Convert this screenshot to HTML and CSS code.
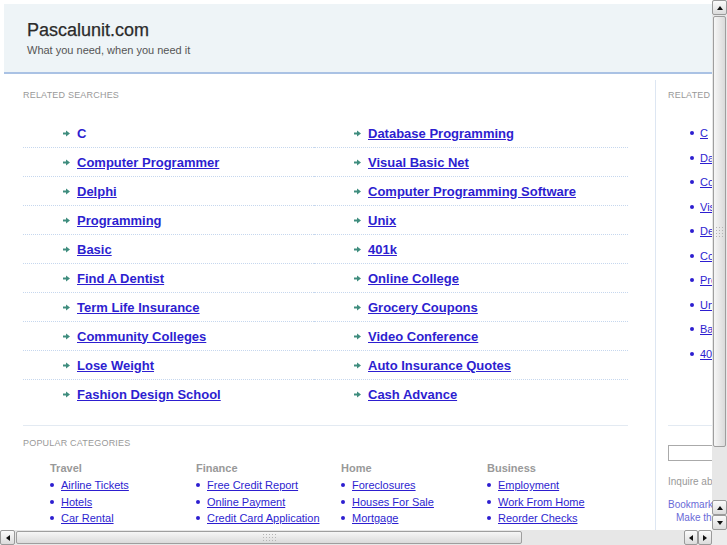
FILE: index.html
```html
<!DOCTYPE html>
<html lang="en">
<head>
    <meta charset="UTF-8">
    <title>Pascalunit.com</title>
    <link rel="stylesheet" href="styles.css">
</head>
<body>
    <div class="viewport">
        <div class="page">
            <div class="header">
                <h1>Pascalunit.com</h1>
                <p>What you need, when you need it</p>
            </div>
            <div class="content">
                <div class="main">
                    <h2 class="label">Related Searches</h2>
                    <ul class="searches">
                        <li><svg class="arr" width="7" height="7" viewBox="0 0 7 7"><path d="M0 3.5h4" stroke="#3f8d7e" stroke-width="2"/><path d="M3 0.5L7 3.5L3 6.5z" fill="#3f8d7e"/></svg><a href="#" class="plain">C</a></li>
                        <li><svg class="arr" width="7" height="7" viewBox="0 0 7 7"><path d="M0 3.5h4" stroke="#3f8d7e" stroke-width="2"/><path d="M3 0.5L7 3.5L3 6.5z" fill="#3f8d7e"/></svg><a href="#">Database Programming</a></li>
                        <li><svg class="arr" width="7" height="7" viewBox="0 0 7 7"><path d="M0 3.5h4" stroke="#3f8d7e" stroke-width="2"/><path d="M3 0.5L7 3.5L3 6.5z" fill="#3f8d7e"/></svg><a href="#">Computer Programmer</a></li>
                        <li><svg class="arr" width="7" height="7" viewBox="0 0 7 7"><path d="M0 3.5h4" stroke="#3f8d7e" stroke-width="2"/><path d="M3 0.5L7 3.5L3 6.5z" fill="#3f8d7e"/></svg><a href="#">Visual Basic Net</a></li>
                        <li><svg class="arr" width="7" height="7" viewBox="0 0 7 7"><path d="M0 3.5h4" stroke="#3f8d7e" stroke-width="2"/><path d="M3 0.5L7 3.5L3 6.5z" fill="#3f8d7e"/></svg><a href="#">Delphi</a></li>
                        <li><svg class="arr" width="7" height="7" viewBox="0 0 7 7"><path d="M0 3.5h4" stroke="#3f8d7e" stroke-width="2"/><path d="M3 0.5L7 3.5L3 6.5z" fill="#3f8d7e"/></svg><a href="#">Computer Programming Software</a></li>
                        <li><svg class="arr" width="7" height="7" viewBox="0 0 7 7"><path d="M0 3.5h4" stroke="#3f8d7e" stroke-width="2"/><path d="M3 0.5L7 3.5L3 6.5z" fill="#3f8d7e"/></svg><a href="#">Programming</a></li>
                        <li><svg class="arr" width="7" height="7" viewBox="0 0 7 7"><path d="M0 3.5h4" stroke="#3f8d7e" stroke-width="2"/><path d="M3 0.5L7 3.5L3 6.5z" fill="#3f8d7e"/></svg><a href="#">Unix</a></li>
                        <li><svg class="arr" width="7" height="7" viewBox="0 0 7 7"><path d="M0 3.5h4" stroke="#3f8d7e" stroke-width="2"/><path d="M3 0.5L7 3.5L3 6.5z" fill="#3f8d7e"/></svg><a href="#">Basic</a></li>
                        <li><svg class="arr" width="7" height="7" viewBox="0 0 7 7"><path d="M0 3.5h4" stroke="#3f8d7e" stroke-width="2"/><path d="M3 0.5L7 3.5L3 6.5z" fill="#3f8d7e"/></svg><a href="#">401k</a></li>
                        <li><svg class="arr" width="7" height="7" viewBox="0 0 7 7"><path d="M0 3.5h4" stroke="#3f8d7e" stroke-width="2"/><path d="M3 0.5L7 3.5L3 6.5z" fill="#3f8d7e"/></svg><a href="#">Find A Dentist</a></li>
                        <li><svg class="arr" width="7" height="7" viewBox="0 0 7 7"><path d="M0 3.5h4" stroke="#3f8d7e" stroke-width="2"/><path d="M3 0.5L7 3.5L3 6.5z" fill="#3f8d7e"/></svg><a href="#">Online College</a></li>
                        <li><svg class="arr" width="7" height="7" viewBox="0 0 7 7"><path d="M0 3.5h4" stroke="#3f8d7e" stroke-width="2"/><path d="M3 0.5L7 3.5L3 6.5z" fill="#3f8d7e"/></svg><a href="#">Term Life Insurance</a></li>
                        <li><svg class="arr" width="7" height="7" viewBox="0 0 7 7"><path d="M0 3.5h4" stroke="#3f8d7e" stroke-width="2"/><path d="M3 0.5L7 3.5L3 6.5z" fill="#3f8d7e"/></svg><a href="#">Grocery Coupons</a></li>
                        <li><svg class="arr" width="7" height="7" viewBox="0 0 7 7"><path d="M0 3.5h4" stroke="#3f8d7e" stroke-width="2"/><path d="M3 0.5L7 3.5L3 6.5z" fill="#3f8d7e"/></svg><a href="#">Community Colleges</a></li>
                        <li><svg class="arr" width="7" height="7" viewBox="0 0 7 7"><path d="M0 3.5h4" stroke="#3f8d7e" stroke-width="2"/><path d="M3 0.5L7 3.5L3 6.5z" fill="#3f8d7e"/></svg><a href="#">Video Conference</a></li>
                        <li><svg class="arr" width="7" height="7" viewBox="0 0 7 7"><path d="M0 3.5h4" stroke="#3f8d7e" stroke-width="2"/><path d="M3 0.5L7 3.5L3 6.5z" fill="#3f8d7e"/></svg><a href="#">Lose Weight</a></li>
                        <li><svg class="arr" width="7" height="7" viewBox="0 0 7 7"><path d="M0 3.5h4" stroke="#3f8d7e" stroke-width="2"/><path d="M3 0.5L7 3.5L3 6.5z" fill="#3f8d7e"/></svg><a href="#">Auto Insurance Quotes</a></li>
                        <li><svg class="arr" width="7" height="7" viewBox="0 0 7 7"><path d="M0 3.5h4" stroke="#3f8d7e" stroke-width="2"/><path d="M3 0.5L7 3.5L3 6.5z" fill="#3f8d7e"/></svg><a href="#">Fashion Design School</a></li>
                        <li><svg class="arr" width="7" height="7" viewBox="0 0 7 7"><path d="M0 3.5h4" stroke="#3f8d7e" stroke-width="2"/><path d="M3 0.5L7 3.5L3 6.5z" fill="#3f8d7e"/></svg><a href="#">Cash Advance</a></li>
                    </ul>

                    <h2 class="label label-cats">Popular Categories</h2>
                    <div class="cats">
                        <div class="cat">
                            <h3>Travel</h3>
                            <ul>
                                <li><a href="#">Airline Tickets</a></li>
                                <li><a href="#">Hotels</a></li>
                                <li><a href="#">Car Rental</a></li>
                            </ul>
                        </div>
                        <div class="cat">
                            <h3>Finance</h3>
                            <ul>
                                <li><a href="#">Free Credit Report</a></li>
                                <li><a href="#">Online Payment</a></li>
                                <li><a href="#">Credit Card Application</a></li>
                            </ul>
                        </div>
                        <div class="cat">
                            <h3>Home</h3>
                            <ul>
                                <li><a href="#">Foreclosures</a></li>
                                <li><a href="#">Houses For Sale</a></li>
                                <li><a href="#">Mortgage</a></li>
                            </ul>
                        </div>
                        <div class="cat">
                            <h3>Business</h3>
                            <ul>
                                <li><a href="#">Employment</a></li>
                                <li><a href="#">Work From Home</a></li>
                                <li><a href="#">Reorder Checks</a></li>
                            </ul>
                        </div>
                    </div>
                </div>

                <div class="side">
                    <h2 class="label">Related Searches</h2>
                    <ul class="side-list">
                        <li><a href="#">C</a></li>
                        <li><a href="#">Database Programming</a></li>
                        <li><a href="#">Computer Programmer</a></li>
                        <li><a href="#">Visual Basic Net</a></li>
                        <li><a href="#">Delphi</a></li>
                        <li><a href="#">Computer Programming Software</a></li>
                        <li><a href="#">Programming</a></li>
                        <li><a href="#">Unix</a></li>
                        <li><a href="#">Basic</a></li>
                        <li><a href="#">401k</a></li>
                    </ul>
                    <div class="tools">
                        <input type="text" class="search">
                        <p class="inquire">Inquire about this domain</p>
                        <p class="bookmark">Bookmark this page</p>
                        <p class="bookmark indent">Make this your homepage</p>
                    </div>
                </div>
            </div>
        </div>
    </div>

    <div class="vscroll">
        <div class="btn up"></div>
        <div class="track">
            <div class="thumb thumb-v"><span class="grip"></span></div>
        </div>
        <div class="btn up"></div>
        <div class="btn down"></div>
    </div>

    <div class="hscroll">
        <div class="btn left"></div>
        <div class="track">
            <div class="thumb thumb-h"><span class="grip"></span></div>
        </div>
        <div class="btn left"></div>
        <div class="btn right"></div>
    </div>
    <div class="corner"></div>
</body>
</html>
```

FILE: styles.css
```css
body {
    margin: 0;
    height: 545px;
    overflow: hidden;
    display: grid;
    grid-template-columns: 712px 15px;
    grid-template-rows: 530px 15px;
    font-family: "Liberation Sans", Arial, sans-serif;
    background-color: #fff;
}
.viewport {
    overflow: hidden;
}
.page {
    width: 1000px;
}

/* header */
.header {
    margin: 4px 0 0 4px;
    height: 53px;
    padding: 15px 0 0 23px;
    background-color: #eef4f7;
    border-bottom: 2px solid #aac2e4;
}
.header h1 {
    margin: 0;
    font-size: 18px;
    line-height: 22px;
    font-weight: normal;
    color: #2b2b2b;
    -webkit-text-stroke: 0.25px #2b2b2b;
}
.header p {
    margin: 2px 0 0;
    font-size: 11px;
    line-height: 14px;
    color: #555;
}

/* main area */
.content {
    display: flex;
    padding-top: 6px;
}
.main {
    width: 605px;
    flex: none;
    margin-left: 23px;
    margin-right: 27px;
}
.label {
    margin: 10px 0 0;
    font-size: 9px;
    line-height: 11px;
    font-weight: normal;
    color: #999;
    text-transform: uppercase;
    letter-spacing: 0.2px;
}
a {
    color: #2d1ed0;
}

.searches {
    list-style: none;
    margin: 18px 0 0;
    padding: 0 0 17px;
    display: grid;
    grid-template-columns: 291px 314px;
    border-bottom: 1px solid #e3eaf2;
}
.searches li {
    height: 28px;
    padding-left: 40px;
    display: flex;
    align-items: center;
    border-bottom: 1px dotted #c6d7ee;
}
.searches li:nth-last-child(-n+2) {
    border-bottom: none;
}
.searches .arr {
    margin-right: 7px;
    flex-shrink: 0;
}
.searches a {
    font-size: 13px;
    font-weight: bold;
}
.searches a.plain {
    text-decoration: none;
}

.label-cats {
    margin-top: 12px;
}
.cats {
    display: flex;
    padding-left: 27px;
    margin-top: 12px;
}
.cat {
    flex: none;
    width: 146px;
}
.cat:nth-child(2) {
    width: 145px;
}
.cat h3 {
    margin: 0 0 2px;
    font-size: 11px;
    line-height: 14px;
    color: #999;
}
.cat ul {
    list-style: none;
    margin: 0;
    padding: 0;
}
.cat li,
.side-list li {
    font-size: 11px;
    line-height: 16.5px;
    display: flex;
    align-items: center;
    white-space: nowrap;
}
.cat li::before,
.side-list li::before {
    content: "";
    width: 4px;
    height: 4px;
    border-radius: 50%;
    background-color: #2d1ed0;
    margin-right: 7px;
    flex-shrink: 0;
}

/* right column */
.side {
    width: 300px;
    flex: none;
    min-height: 470px;
    padding-left: 12px;
    border-left: 1px solid #dde6f2;
}
.side-list {
    list-style: none;
    margin: 20px 0 0;
    padding: 0 0 0 22px;
}
.side-list li {
    line-height: 24.5px;
}
.side-list li::before {
    margin-right: 6px;
}
.tools {
    margin-top: 59px;
    padding-top: 19px;
    border-top: 1px solid #e3eaf2;
}
.search {
    display: block;
    width: 150px;
    height: 16px;
    margin: 0;
    box-sizing: border-box;
    border: 1px solid #aaa;
}
.inquire {
    margin: 15px 0 0;
    font-size: 10px;
    line-height: 12px;
    color: #999;
}
.bookmark {
    margin: 10px 0 0;
    font-size: 10px;
    line-height: 13px;
    color: #6a6ad8;
}
.bookmark.indent {
    margin-top: 0;
    padding-left: 8px;
}

/* scrollbars */
.vscroll,
.hscroll {
    display: flex;
    background-color: #efefef;
}
.vscroll {
    flex-direction: column;
}
.track {
    flex: 1;
    padding: 1px;
    background-color: #f1f1f1;
    background-image: radial-gradient(#dcdcdc 0.6px, transparent 0.8px);
    background-size: 2px 2px;
}
.thumb {
    box-sizing: border-box;
    border: 1px solid #9e9e9e;
    border-radius: 2px;
    display: flex;
    align-items: center;
    justify-content: center;
}
.thumb-v {
    height: 431px;
    background: linear-gradient(90deg, #f6f6f6, #dadada);
}
.thumb-h {
    width: 506px;
    height: 13px;
    background: linear-gradient(#f6f6f6, #dadada);
}
.grip {
    width: 9px;
    height: 12px;
    background-image: radial-gradient(#b4b4b4 0.7px, transparent 0.9px);
    background-size: 3px 3px;
}
.thumb-h .grip {
    width: 15px;
    height: 9px;
}
.btn {
    width: 15px;
    height: 15px;
    flex-shrink: 0;
    box-sizing: border-box;
    border: 1px solid #9a9a9a;
    border-radius: 2px;
    background: linear-gradient(#fbfbfb, #dcdcdc);
    display: flex;
    align-items: center;
    justify-content: center;
}
.hscroll .btn {
    width: 14px;
}
.hscroll .btn:first-child {
    width: 15px;
}
.btn::after {
    content: "";
    width: 0;
    height: 0;
}
.up::after {
    border-left: 3px solid transparent;
    border-right: 3px solid transparent;
    border-bottom: 4px solid #111;
}
.down::after {
    border-left: 3px solid transparent;
    border-right: 3px solid transparent;
    border-top: 4px solid #111;
}
.left::after {
    border-top: 3px solid transparent;
    border-bottom: 3px solid transparent;
    border-right: 4px solid #111;
}
.right::after {
    border-top: 3px solid transparent;
    border-bottom: 3px solid transparent;
    border-left: 4px solid #111;
}
.corner {
    background-color: #ececec;
}
```
